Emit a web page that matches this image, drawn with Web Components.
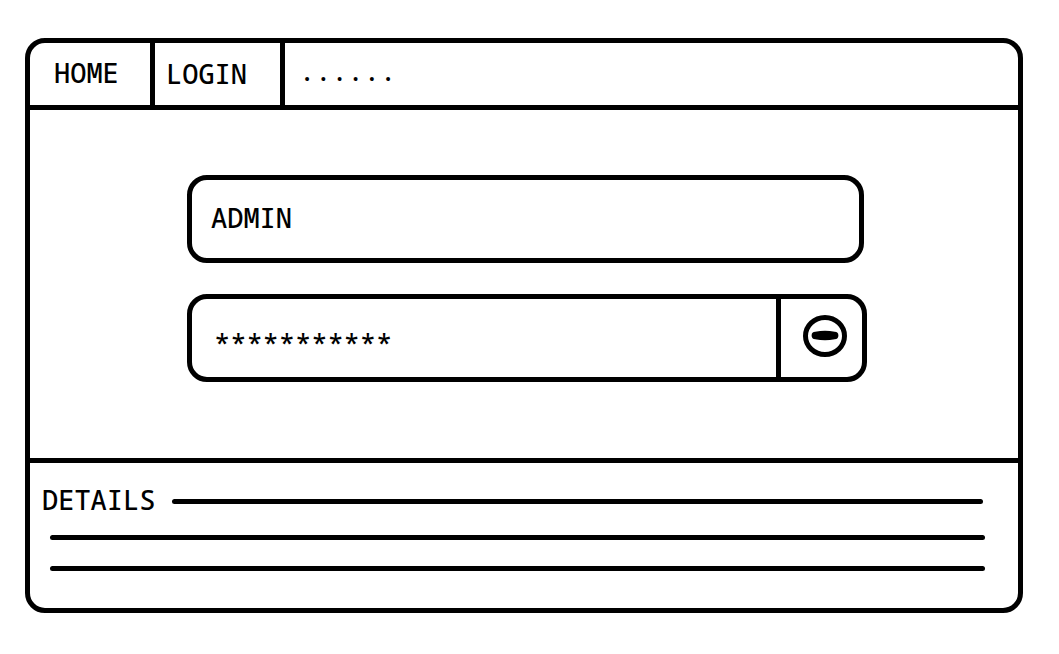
<!DOCTYPE html>
<html lang="en">
<head>
<meta charset="utf-8">
<title>Login</title>
<style>
  body {
    margin: 0;
    padding: 38px 36px 41px 25px;
    background: #fff;
    color: #000;
    font: 500 27px/32px "Noto Sans Mono", "DejaVu Sans Mono", monospace;
    --line: 5px;
  }
</style>
</head>
<body>
<wire-window>
  <wire-nav slot="nav">
    <wire-tab href="#home">HOME</wire-tab>
    <wire-tab href="#login">LOGIN</wire-tab>
    <wire-tab href="#more">......</wire-tab>
  </wire-nav>
  <wire-login></wire-login>
  <wire-details slot="details">DETAILS</wire-details>
</wire-window>
<script>
const define = (name, html, setup) => customElements.define(name, class extends HTMLElement {
  constructor() {
    super();
    this.attachShadow({ mode: "open" }).innerHTML = html;
  }
  connectedCallback() { if (setup) setup(this, this.shadowRoot); }
});

define("wire-window", `
  <style>
    :host { display: block; border: var(--line) solid; border-radius: 20px; overflow: hidden; }
    header { border-bottom: var(--line) solid; }
    footer { border-top: var(--line) solid; }
  </style>
  <header><slot name="nav"></slot></header>
  <main><slot></slot></main>
  <footer><slot name="details"></slot></footer>`);

define("wire-nav", `
  <style>
    :host { display: block; }
    nav { display: grid; grid-template-columns: 125px 130px 1fr; }
    ::slotted(:not(:last-child)) { border-right: var(--line) solid; }
    ::slotted(*) { padding-left: 11px; }
    ::slotted(:first-child) { padding: 0 0 2px 24px; }
    ::slotted(:last-child) { padding: 0 0 6px 14px; }
  </style>
  <nav><slot></slot></nav>`);

define("wire-tab", `
  <style>
    :host { display: flex; align-items: center; box-sizing: border-box; height: 62px; }
    a { display: block; color: inherit; text-decoration: none; }
  </style>
  <a><slot></slot></a>`, (host, root) => {
  root.querySelector("a").href = host.getAttribute("href");
});

define("wire-login", `
  <style>
    :host { display: block; padding: 65px 151px 76px 157px; }
    form { display: grid; gap: 31px; }
    .field {
      display: flex; box-sizing: border-box; height: 88px;
      border: var(--line) solid; border-radius: 20px; overflow: hidden;
    }
    .user { margin-right: 3px; }
    input {
      flex: 1; min-width: 0; padding: 0 19px 2px; border: 0; outline: 0;
      background: none; color: inherit; font: inherit;
    }
    .secret input { padding: 11px 22px 0; }
    button {
      display: grid; place-items: center; box-sizing: border-box; width: 86px;
      padding: 0 0 4px 6px; border: 0; border-left: var(--line) solid;
      background: none; color: inherit;
    }
    svg { display: block; }
  </style>
  <form>
    <div class="field user"><input type="text" aria-label="User name" value="ADMIN"></div>
    <div class="field secret">
      <input type="text" aria-label="Password" value="***********">
      <button type="button" aria-label="Show password">
        <svg width="44" height="42" viewBox="0 0 44 42">
          <ellipse cx="22" cy="21" rx="19.5" ry="18.5" fill="none" stroke="currentColor" stroke-width="5"/>
          <path d="M12.3 16.8Q22 14.6 31.7 16.8A3.7 3.7 0 0 1 31.7 24.2Q22 26.2 12.3 24.2A3.7 3.7 0 0 1 12.3 16.8Z" fill="currentColor"/>
        </svg>
      </button>
    </div>
  </form>`);

define("wire-details", `
  <style>
    :host { display: block; padding: 20px 33px 37px 12px; }
    .row { display: flex; align-items: center; gap: 17px; height: 36px; }
    h2 { margin: 0; padding-bottom: 3px; font: inherit; }
    .rule { flex: 1; height: var(--line); border-radius: 3px; background: currentColor; }
    .row .rule { margin-right: 2px; }
    .lines { display: grid; gap: 26px; padding: 16px 0 0 8px; }
  </style>
  <div class="row"><h2><slot></slot></h2><div class="rule"></div></div>
  <div class="lines"><div class="rule"></div><div class="rule"></div></div>`);
</script>
</body>
</html>
